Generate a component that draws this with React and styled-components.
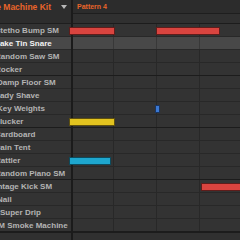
import React from "react";
import styled, { createGlobalStyle } from "styled-components";

const sounds = [
  { name: "Stetho Bump SM", notes: [{ x: -4, w: 46, c: "red" }, { x: 83, w: 64, c: "red" }] },
  { name: "Fake Tin Snare", selected: true },
  { name: "Random Saw SM" },
  { name: "Rocker" },
  { name: "Damp Floor SM", shift: 3 },
  { name: "Lady Shave" },
  { name: "Key Weights", shift: 3, notes: [{ x: 82, w: 5, c: "blue" }] },
  { name: "Flucker", notes: [{ x: -4, w: 46, c: "yellow" }] },
  { name: "Cardboard" },
  { name: "Pain Tent" },
  { name: "Rattler", notes: [{ x: -4, w: 42, c: "cyan" }] },
  { name: "Random Piano SM" },
  { name: "Vintage Kick SM", shift: 10, notes: [{ x: 128, w: 60, c: "red" }] },
  { name: "Nail", shift: 3 },
  { name: "Super Drip", shift: 0 },
  { name: "SM Smoke Machine", shift: 7 },
];

const noteColors = {
  red: ["#d9443f", "#5e1d1b"],
  yellow: ["#e2c31f", "#5e5010"],
  blue: ["#3b78d2", "#1a3560"],
  cyan: ["#1ea7cf", "#0d4a5c"],
};

const GlobalStyle = createGlobalStyle`
  html, body {
    margin: 0;
    padding: 0;
    background: #2f2f2f;
    overflow: hidden;
  }
  * { box-sizing: border-box; }
`;

const Screen = styled.div`
  width: 240px;
  height: 240px;
  display: flex;
  overflow: hidden;
  background: #303030;
  font-family: "Liberation Sans", Arial, sans-serif;
`;

const SoundPanel = styled.div`
  width: 73px;
  flex: none;
  border-right: 2px solid #1b1b1b;
  overflow: hidden;
`;

const KitHeader = styled.div`
  height: 24px;
  background: #2d2d2d;
  border-bottom: 1px solid #1e1e1e;
`;

const KitTitle = styled.div`
  height: 13px;
  display: flex;
  align-items: center;
  justify-content: flex-end;
  gap: 10px;
  padding-right: 4px;
  white-space: nowrap;
  color: #e9642a;
  font-size: 8.5px;
  font-weight: bold;
`;

const Caret = styled.svg`
  flex: none;
  width: 6px;
  height: 4px;
`;

const PatternPanel = styled.div`
  flex: 1;
  min-width: 0;
  display: flex;
  flex-direction: column;
`;

const PatternTab = styled.div`
  height: 14px;
  display: flex;
  align-items: center;
  padding-left: 4px;
  background: #2c2c2c;
  border-bottom: 1px solid #1e1e1e;
  color: #e9642a;
  font-size: 7px;
  font-weight: bold;
  white-space: nowrap;
`;

const Ruler = styled.div`
  height: 10px;
  background: #303030;
  border-bottom: 1px solid #1c1c1c;
`;

const Row = styled.div`
  height: 13px;
  position: relative;
  border-bottom: 1px solid ${(p) => (p.$groupEnd ? "#1c1c1c" : "#282828")};
  background: ${(p) => (p.$selected ? "#484848" : "#333333")};
`;

const NameRow = styled(Row)`
  display: flex;
  align-items: center;
  white-space: nowrap;
  font-size: 8px;
  font-weight: bold;
  color: ${(p) => (p.$selected ? "#f2f2f2" : "#b4b4b4")};
  text-indent: ${(p) => -p.$shift}px;
`;

const GridRow = styled(Row)`
  background-image: linear-gradient(to right, rgba(0, 0, 0, 0.22) 1px, transparent 1px);
  background-size: 43px 100%;
  background-position: 40px 0;
`;

const Note = styled.div`
  position: absolute;
  top: 3px;
  height: 8px;
  background: ${(p) => noteColors[p.$color][0]};
  border: 1px solid ${(p) => noteColors[p.$color][1]};
`;

const Footer = styled.div`
  flex: 1;
  background: #303030;
  border-top: 1px solid #1c1c1c;
`;

export default function App() {
  return (
    <>
      <GlobalStyle />
      <Screen>
        <SoundPanel>
          <KitHeader>
            <KitTitle>
              <span>Vintage Machine Kit</span>
              <Caret viewBox="0 0 6 4">
                <polygon points="0,0 6,0 3,4" fill="#b8b8b8" />
              </Caret>
            </KitTitle>
          </KitHeader>
          {sounds.map((s, i) => (
            <NameRow
              key={s.name}
              $selected={s.selected}
              $groupEnd={i % 4 === 3}
              $shift={s.shift ?? 5}
            >
              {s.name}
            </NameRow>
          ))}
          <Footer />
        </SoundPanel>
        <PatternPanel>
          <PatternTab>Pattern 4</PatternTab>
          <Ruler />
          {sounds.map((s, i) => (
            <GridRow key={s.name} $selected={s.selected} $groupEnd={i % 4 === 3}>
              {(s.notes || []).map((n, j) => (
                <Note key={j} $color={n.c} style={{ left: n.x, width: n.w }} />
              ))}
            </GridRow>
          ))}
          <Footer />
        </PatternPanel>
      </Screen>
    </>
  );
}
